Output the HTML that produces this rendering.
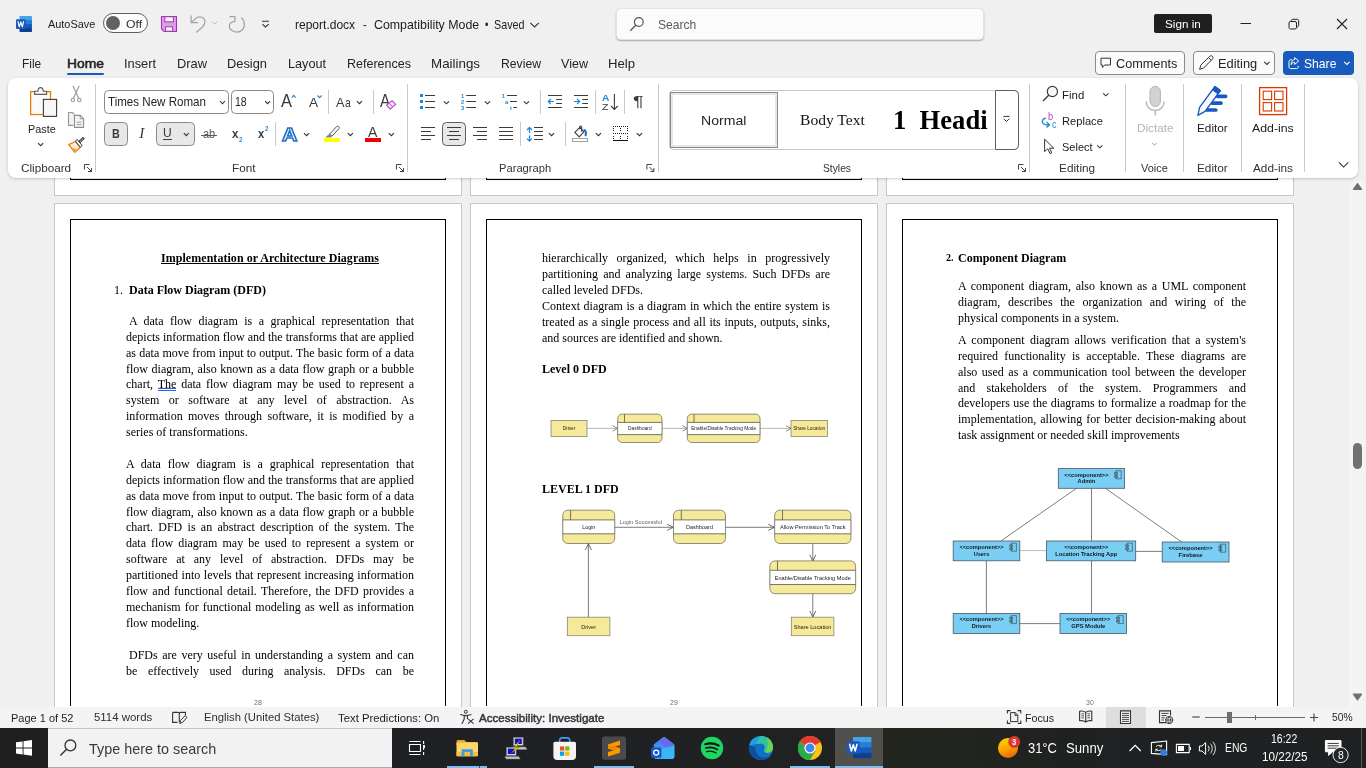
<!DOCTYPE html>
<html lang="en">
<head>
<meta charset="utf-8">
<title>report.docx - Word</title>
<style>
*{box-sizing:border-box;margin:0;padding:0}
html,body{width:1366px;height:768px;overflow:hidden;background:#f0f0f0}
body{position:relative;font-family:"Liberation Sans",sans-serif;font-size:13px;color:#242424}
.a{position:absolute;white-space:pre}
svg{position:absolute;overflow:visible}
#doc{position:absolute;left:0;top:0;width:1366px;height:768px;clip-path:inset(178px 0 61px 0);background:#f0f0f0}
.page{position:absolute;width:408px;height:530px;background:#fff;border:1px solid #c8c8c8}
.pb{position:absolute;width:376px;height:498px;border:1px solid #000}
.t{position:absolute;white-space:pre;font-family:"Liberation Serif",serif;font-size:12px;line-height:16px;height:16px;color:#000}
.j{width:288px;text-align:justify;text-align-last:justify;white-space:normal}
.b{font-weight:bold}
.pn{position:absolute;font-family:"Liberation Sans",sans-serif;font-size:7px;color:#6e6e6e;line-height:8px;height:8px;width:20px;text-align:center}
#ribbon{position:absolute;left:8px;top:78px;width:1350px;height:100px;background:#fff;border-radius:8px;box-shadow:0 1px 3px rgba(0,0,0,.2)}
#status{position:absolute;left:0;top:707px;width:1366px;height:21px;background:#f4f4f4}
#task{position:absolute;left:0;top:728px;width:1366px;height:40px;background:linear-gradient(90deg,#1f1f1f 0,#1f1f1f 48px,#1e2023 400px,#1f2123 800px,#23251f 890px,#22241f 960px,#1f2122 1100px,#1e2022 1366px)}
#all{position:absolute;left:0;top:0;width:1366px;height:768px;overflow:hidden;will-change:transform}

</style>
</head>
<body>
<div id="all">
<svg style="left:15px;top:15px" width="18" height="18" viewBox="0 0 18 18" >
<rect x="4.5" y="1" width="12.5" height="4.2" rx="0.8" fill="#41a5ee"/>
<rect x="4.5" y="5" width="12.5" height="4" fill="#2b7cd3"/>
<rect x="4.5" y="9" width="12.5" height="4" fill="#185abd"/>
<rect x="4.5" y="13" width="12.5" height="4" rx="0.8" fill="#103f91"/>
<rect x="1" y="4.3" width="9.6" height="9.6" rx="1" fill="#185abd"/>
<path d="M3 6.6l1.3 5.2 1.5-5 1.5 5 1.3-5.2" fill="none" stroke="#fff" stroke-width="1.15" stroke-linejoin="round" stroke-linecap="round"/>
</svg>
<span class="a" style="left:48.3px;top:18px;font-size:11.3px;line-height:12px;height:12px;color:#1c1c1c;transform:scaleX(0.9633);transform-origin:0 0;">AutoSave</span>
<div class="a" style="left:103px;top:13px;width:45px;height:20px;background:#fcfcfc;border:1px solid #5e5e5e;border-radius:10px;"></div>
<div class="a" style="left:106.3px;top:16.2px;width:13.6px;height:13.6px;background:#616161;border-radius:7px;"></div>
<span class="a" style="left:125.6px;top:18px;font-size:11.3px;line-height:12px;height:12px;color:#333;transform:scaleX(1.0891);transform-origin:0 0;">Off</span>
<svg style="left:160px;top:15px" width="18" height="18" viewBox="0 0 18 18" >
<path d="M1.5 1.5h15v15H4.2L1.5 13.8z" fill="#dc9fe6" stroke="#a233b4" stroke-width="1.1" stroke-linejoin="round"/>
<rect x="4.8" y="1.8" width="8.6" height="5" fill="#fbfbfb" stroke="#a233b4" stroke-width="1"/>
<rect x="5.6" y="11.8" width="7" height="4.4" fill="#fbfbfb" stroke="#a233b4" stroke-width="1"/>
</svg>
<svg style="left:188px;top:14px" width="20" height="20" viewBox="0 0 20 20" ><path d="M3.1 1.6V8.7H10.2M3.4 8.4L8 4.2C11.2 1.4 17 3.2 17 8C17 10.6 15.4 12.2 14 13.5L8.1 18.4" fill="none" stroke="#a3a3a3" stroke-width="1.25"/></svg>
<svg style="left:211px;top:20px" width="8" height="6" viewBox="0 0 8 6" ><path d="M1 1.6L3.6 4.2L6.2 1.6" fill="none" stroke="#b5b5b5" stroke-width="1"/></svg>
<svg style="left:227px;top:14px" width="20" height="20" viewBox="0 0 20 20" ><path d="M2.4 2.5H7.9V8M7.7 7.4C4.5 7.9 2.3 9.6 2.3 12.2C2.3 15.4 5.6 18 9.8 18C14 18 17.4 14.9 17.4 10.8C17.4 7.6 15.9 5 14.3 3.6" fill="none" stroke="#a3a3a3" stroke-width="1.25"/></svg>
<svg style="left:260px;top:19px" width="12" height="10" viewBox="0 0 12 10" ><path d="M2 2.3H9M2.3 5.2L5.5 8L8.7 5.2" fill="none" stroke="#333" stroke-width="1.1"/></svg>
<span class="a" style="left:295.2px;top:18px;font-size:12.4px;line-height:14px;height:14px;color:#1c1c1c;transform:scaleX(0.9696);transform-origin:0 0;">report.docx</span>
<span class="a" style="left:362.9px;top:18px;font-size:12.4px;line-height:14px;height:14px;color:#1c1c1c;transform:scaleX(0.8936);transform-origin:0 0;">-</span>
<span class="a" style="left:373.8px;top:18px;font-size:12.4px;line-height:14px;height:14px;color:#1c1c1c;transform:scaleX(0.9983);transform-origin:0 0;">Compatibility Mode</span>
<span class="a" style="left:485px;top:18px;font-size:12.4px;line-height:14px;height:14px;color:#1c1c1c;transform:scaleX(0.7827);transform-origin:0 0;">•</span>
<span class="a" style="left:494px;top:18px;font-size:12.4px;line-height:14px;height:14px;color:#1c1c1c;transform:scaleX(0.8679);transform-origin:0 0;">Saved</span>
<svg style="left:529px;top:21px" width="12" height="8" viewBox="0 0 12 8" ><path d="M1.3 1.8L5.6 6L9.9 1.8" fill="none" stroke="#333" stroke-width="1.1"/></svg>
<div class="a" style="left:616px;top:8px;width:368px;height:32px;background:#fbfbfb;border:1px solid #e4e4e4;border-radius:4.5px;box-shadow:0 1px 1.5px rgba(0,0,0,.3);"></div>
<svg style="left:628px;top:15px" width="20" height="18" viewBox="0 0 20 18" ><circle cx="10.8" cy="7" r="4.4" fill="none" stroke="#555" stroke-width="1.2"/><path d="M7.7 10.3L2.3 15.8" stroke="#555" stroke-width="1.3" fill="none"/></svg>
<span class="a" style="left:658.3px;top:17px;font-size:13px;line-height:15px;height:15px;color:#5a5a5a;transform:scaleX(0.9295);transform-origin:0 0;">Search</span>
<div class="a" style="left:1154px;top:14px;width:58px;height:19px;background:#1f1f1f;border-radius:2px;"></div>
<span class="a" style="left:1164.8px;top:18px;font-size:11.3px;line-height:12px;height:12px;color:#fff;transform:scaleX(1.0363);transform-origin:0 0;">Sign in</span>
<svg style="left:1238px;top:18px" width="14" height="12" viewBox="0 0 14 12" ><path d="M2.5 5.5H13" stroke="#222" stroke-width="1" fill="none"/></svg>
<svg style="left:1287px;top:17px" width="14" height="14" viewBox="0 0 14 14" ><rect x="2" y="4.5" width="7.5" height="7.5" rx="1.5" fill="none" stroke="#222" stroke-width="1"/><path d="M4.2 4.5V3.8C4.2 3 4.8 2.3 5.7 2.3H10C11.1 2.3 11.7 3 11.7 4V8.3C11.7 9.2 11.1 9.8 10.3 9.8H9.5" fill="none" stroke="#222" stroke-width="1"/></svg>
<svg style="left:1335px;top:17px" width="14" height="14" viewBox="0 0 14 14" ><path d="M2 2L12 12M12 2L2 12" stroke="#222" stroke-width="1.1" fill="none"/></svg>
<span class="a" style="left:22px;top:56px;font-size:13px;line-height:15px;height:15px;color:#242424;transform:scaleX(0.9163);transform-origin:0 0;">File</span>
<span class="a" style="left:67px;top:56px;font-size:13px;line-height:15px;height:15px;color:#242424;transform:scaleX(1.0667);transform-origin:0 0;-webkit-text-stroke:0.55px #242424;">Home</span>
<span class="a" style="left:124px;top:56px;font-size:13px;line-height:15px;height:15px;color:#242424;transform:scaleX(0.9841);transform-origin:0 0;">Insert</span>
<span class="a" style="left:177px;top:56px;font-size:13px;line-height:15px;height:15px;color:#242424;transform:scaleX(0.9887);transform-origin:0 0;">Draw</span>
<span class="a" style="left:227px;top:56px;font-size:13px;line-height:15px;height:15px;color:#242424;transform:scaleX(0.9884);transform-origin:0 0;">Design</span>
<span class="a" style="left:288px;top:56px;font-size:13px;line-height:15px;height:15px;color:#242424;transform:scaleX(0.9732);transform-origin:0 0;">Layout</span>
<span class="a" style="left:347px;top:56px;font-size:13px;line-height:15px;height:15px;color:#242424;transform:scaleX(0.9626);transform-origin:0 0;">References</span>
<span class="a" style="left:431px;top:56px;font-size:13px;line-height:15px;height:15px;color:#242424;transform:scaleX(1.0275);transform-origin:0 0;">Mailings</span>
<span class="a" style="left:501px;top:56px;font-size:13px;line-height:15px;height:15px;color:#242424;transform:scaleX(0.9384);transform-origin:0 0;">Review</span>
<span class="a" style="left:561px;top:56px;font-size:13px;line-height:15px;height:15px;color:#242424;transform:scaleX(0.9659);transform-origin:0 0;">View</span>
<span class="a" style="left:608px;top:56px;font-size:13px;line-height:15px;height:15px;color:#242424;transform:scaleX(1.0093);transform-origin:0 0;">Help</span>
<div class="a" style="left:67px;top:73px;width:37px;height:2px;background:#185abd;border-radius:1px;"></div>
<div class="a" style="left:1095px;top:51px;width:90px;height:24px;background:#fbfbfb;border:1px solid #8a8a8a;border-radius:4px;"></div>
<svg style="left:1099px;top:56px" width="14" height="14" viewBox="0 0 14 14" ><path d="M2 2.2H11.5V9H5.8L3.4 11.4V9H2Z" fill="none" stroke="#333" stroke-width="1" stroke-linejoin="round"/></svg>
<span class="a" style="left:1116.3px;top:56px;font-size:13px;line-height:15px;height:15px;transform:scaleX(0.9752);transform-origin:0 0;">Comments</span>
<div class="a" style="left:1193px;top:51px;width:82px;height:24px;background:#fbfbfb;border:1px solid #8a8a8a;border-radius:4px;"></div>
<svg style="left:1197px;top:54px" width="18" height="18" viewBox="0 0 18 18" ><path d="M2.6 15.4L3.8 11.2L12.6 2.4C13.4 1.6 14.6 1.6 15.4 2.4C16.2 3.2 16.2 4.4 15.4 5.2L6.6 14Z M11.6 3.6L14.2 6.2" fill="none" stroke="#333" stroke-width="1" stroke-linejoin="round"/></svg>
<span class="a" style="left:1218.4px;top:56px;font-size:13px;line-height:15px;height:15px;transform:scaleX(0.9862);transform-origin:0 0;">Editing</span>
<svg style="left:1263px;top:60px" width="8" height="7" viewBox="0 0 8 7" ><path d="M1.2 1.8L3.9 4.5L6.6 1.8" fill="none" stroke="#333" stroke-width="1.1"/></svg>
<div class="a" style="left:1283px;top:51px;width:71px;height:24px;background:#185abd;border-radius:4px;"></div>
<svg style="left:1287px;top:55px" width="14" height="16" viewBox="0 0 14 16" ><path d="M5.2 4.8H3.6C2.7 4.8 2 5.5 2 6.4V12C2 12.9 2.7 13.6 3.6 13.6H9.6C10.5 13.6 11.2 12.9 11.2 12V10.8M7.6 2.6L11.8 6L7.6 9.4V7.4C5.8 7.4 4.8 8.2 4.2 9.6C4.2 6.8 5.6 4.9 7.6 4.6Z" fill="none" stroke="#fff" stroke-width="1" stroke-linejoin="round"/></svg>
<span class="a" style="left:1304.3px;top:56px;font-size:13px;line-height:15px;height:15px;color:#fff;transform:scaleX(0.9336);transform-origin:0 0;">Share</span>
<svg style="left:1343px;top:60px" width="8" height="7" viewBox="0 0 8 7" ><path d="M1.2 1.8L3.9 4.5L6.6 1.8" fill="none" stroke="#fff" stroke-width="1.1"/></svg>
<div id="doc">
<div class="page" style="left:54px;top:-334px"></div>
<div class="pb" style="left:70px;top:-318px"></div>
<div class="page" style="left:54px;top:203px"></div>
<div class="pb" style="left:70px;top:219px"></div>
<div style="position:absolute;left:55px;top:706px;width:406px;height:1px;background:#fff"></div>
<div class="pn" style="left:248px;top:699px">28</div>
<div class="page" style="left:470px;top:-334px"></div>
<div class="pb" style="left:486px;top:-318px"></div>
<div class="page" style="left:470px;top:203px"></div>
<div class="pb" style="left:486px;top:219px"></div>
<div style="position:absolute;left:471px;top:706px;width:406px;height:1px;background:#fff"></div>
<div class="pn" style="left:664px;top:699px">29</div>
<div class="page" style="left:886px;top:-334px"></div>
<div class="pb" style="left:902px;top:-318px"></div>
<div class="page" style="left:886px;top:203px"></div>
<div class="pb" style="left:902px;top:219px"></div>
<div style="position:absolute;left:887px;top:706px;width:406px;height:1px;background:#fff"></div>
<div class="pn" style="left:1080px;top:699px">30</div>
<div class="t b" style="left:161px;top:250px;text-decoration:underline;letter-spacing:0.045px;">Implementation or Architecture Diagrams</div>
<div class="t" style="left:114px;top:282px;">1.</div>
<div class="t b" style="left:129px;top:282px;">Data Flow Diagram (DFD)</div>
<div class="t j" style="left:126px;top:313px;padding-left:3px;">A data flow diagram is a graphical representation that</div>
<div class="t j" style="left:126px;top:329px;">depicts information flow and the transforms that are applied</div>
<div class="t j" style="left:126px;top:345px;">as data move from input to output. The basic form of a data</div>
<div class="t j" style="left:126px;top:361px;">flow diagram, also known as a data flow graph or a bubble</div>
<div class="t j" style="left:126px;top:376px;">chart, The data flow diagram may be used to represent a</div>
<div class="t j" style="left:126px;top:392px;">system or software at any level of abstraction. As</div>
<div class="t j" style="left:126px;top:408px;">information moves through software, it is modified by a</div>
<div class="t" style="left:126px;top:424px;">series of transformations.</div>
<div class="t j" style="left:126px;top:456px;">A data flow diagram is a graphical representation that</div>
<div class="t j" style="left:126px;top:472px;">depicts information flow and the transforms that are applied</div>
<div class="t j" style="left:126px;top:488px;">as data move from input to output. The basic form of a data</div>
<div class="t j" style="left:126px;top:504px;">flow diagram, also known as a data flow graph or a bubble</div>
<div class="t j" style="left:126px;top:519px;">chart. DFD is an abstract description of the system. The</div>
<div class="t j" style="left:126px;top:535px;">data flow diagram may be used to represent a system or</div>
<div class="t j" style="left:126px;top:551px;">software at any level of abstraction. DFDs may be</div>
<div class="t j" style="left:126px;top:567px;">partitioned into levels that represent increasing information</div>
<div class="t j" style="left:126px;top:583px;">flow and functional detail. Therefore, the DFD provides a</div>
<div class="t j" style="left:126px;top:599px;">mechanism for functional modeling as well as information</div>
<div class="t" style="left:126px;top:615px;">flow modeling.</div>
<div class="t j" style="left:126px;top:647px;padding-left:3px;">DFDs are very useful in understanding a system and can</div>
<div class="t j" style="left:126px;top:663px;">be effectively used during analysis. DFDs can be</div>
<div style="position:absolute;left:158px;top:388px;width:18px;height:3px;border-top:1px solid #2563e0;border-bottom:1px solid #2563e0"></div>
<div class="t j" style="left:542px;top:250px;">hierarchically organized, which helps in progressively</div>
<div class="t j" style="left:542px;top:266px;">partitioning and analyzing large systems. Such DFDs are</div>
<div class="t" style="left:542px;top:282px;">called leveled DFDs.</div>
<div class="t j" style="left:542px;top:298px;">Context diagram is a diagram in which the entire system is</div>
<div class="t j" style="left:542px;top:314px;">treated as a single process and all its inputs, outputs, sinks,</div>
<div class="t" style="left:542px;top:330px;">and sources are identified and shown.</div>
<div class="t b" style="left:542px;top:361px;">Level 0 DFD</div>
<div class="t b" style="left:542px;top:481px;">LEVEL 1 DFD</div>
<div class="t b" style="left:946px;top:250px;font-size:10px;">2.</div>
<div class="t b" style="left:958px;top:250px;">Component Diagram</div>
<div class="t j" style="left:958px;top:278px;">A component diagram, also known as a UML component</div>
<div class="t j" style="left:958px;top:294px;">diagram, describes the organization and wiring of the</div>
<div class="t" style="left:958px;top:310px;">physical components in a system.</div>
<div class="t j" style="left:958px;top:332px;">A component diagram allows verification that a system's</div>
<div class="t j" style="left:958px;top:348px;">required functionality is acceptable. These diagrams are</div>
<div class="t j" style="left:958px;top:364px;">also used as a communication tool between the developer</div>
<div class="t j" style="left:958px;top:380px;">and stakeholders of the system. Programmers and</div>
<div class="t j" style="left:958px;top:395px;">developers use the diagrams to formalize a roadmap for the</div>
<div class="t j" style="left:958px;top:411px;">implementation, allowing for better decision-making about</div>
<div class="t" style="left:958px;top:427px;">task assignment or needed skill improvements</div>
<svg width="1366" height="768" viewBox="0 0 1366 768" style="left:0;top:0" font-family="Liberation Sans, sans-serif">
<rect x="551" y="420.4" width="36" height="16.1" fill="#f5e99a" stroke="#8a8672" stroke-width="0.8"/>
<text x="569" y="430.406" font-size="4.6" text-anchor="middle" fill="#2a1f0c" font-weight="normal" opacity="1" textLength="12.7" lengthAdjust="spacingAndGlyphs">Driver</text>
<path d="M587 428.4L617.5 428.4" stroke="#909090" stroke-width="0.65" fill="none"/>
<path d="M612.64 425.62L617.5 428.4L612.64 431.18" stroke="#4a4a4a" stroke-width="0.65" fill="none"/>
<rect x="617.7" y="414.1" width="44.3" height="28.4" rx="4.5" fill="#f5e99a" stroke="#77735f" stroke-width="0.8"/>
<rect x="618.1" y="422.4" width="43.5" height="12.2" fill="#fff"/>
<path d="M617.7 422.4H662M617.7 434.6H662M624.5 414.1V422.4" stroke="#5a5748" stroke-width="0.8" fill="none"/>
<path d="M617.7 422.4V434.6M662 422.4V434.6" stroke="#8a8a8a" stroke-width="0.7" fill="none"/>
<text x="639.85" y="430.456" font-size="4.6" text-anchor="middle" fill="#1c1c26" font-weight="normal" opacity="1" textLength="23.5" lengthAdjust="spacingAndGlyphs">Dashboard</text>
<path d="M662 428.4L687.3 428.4" stroke="#909090" stroke-width="0.65" fill="none"/>
<path d="M682.44 425.62L687.3 428.4L682.44 431.18" stroke="#4a4a4a" stroke-width="0.65" fill="none"/>
<rect x="687.3" y="414.1" width="72.7" height="28.4" rx="4.5" fill="#f5e99a" stroke="#77735f" stroke-width="0.8"/>
<rect x="687.7" y="422.4" width="71.9" height="12.2" fill="#fff"/>
<path d="M687.3 422.4H760M687.3 434.6H760M694 414.1V422.4" stroke="#5a5748" stroke-width="0.8" fill="none"/>
<path d="M687.3 422.4V434.6M760 422.4V434.6" stroke="#8a8a8a" stroke-width="0.7" fill="none"/>
<text x="723.65" y="430.456" font-size="4.6" text-anchor="middle" fill="#1c1c26" font-weight="normal" opacity="1" textLength="65" lengthAdjust="spacingAndGlyphs">Enable/Disable Tracking Mode</text>
<path d="M760 428.4L791 428.4" stroke="#909090" stroke-width="0.65" fill="none"/>
<path d="M786.14 425.62L791 428.4L786.14 431.18" stroke="#4a4a4a" stroke-width="0.65" fill="none"/>
<rect x="791" y="420.4" width="36.4" height="16.1" fill="#f5e99a" stroke="#8a8672" stroke-width="0.8"/>
<text x="809.2" y="430.406" font-size="4.6" text-anchor="middle" fill="#2a1f0c" font-weight="normal" opacity="1" textLength="32" lengthAdjust="spacingAndGlyphs">Share Location</text>
<rect x="562.8" y="510.2" width="51.9" height="33.3" rx="5" fill="#f5e99a" stroke="#77735f" stroke-width="0.8"/>
<rect x="563.2" y="519.9" width="51.1" height="13.9" fill="#fff"/>
<path d="M562.8 519.9H614.7M562.8 533.8H614.7M570.6 510.2V519.9" stroke="#5a5748" stroke-width="0.8" fill="none"/>
<path d="M562.8 519.9V533.8M614.7 519.9V533.8" stroke="#8a8a8a" stroke-width="0.7" fill="none"/>
<text x="588.75" y="529.166" font-size="5.6" text-anchor="middle" fill="#1c1c26" font-weight="normal" opacity="1" textLength="13.2" lengthAdjust="spacingAndGlyphs">Login</text>
<path d="M614.7 527.3L673.4 527.3" stroke="#5c5c5c" stroke-width="0.8" fill="none"/>
<path d="M667.10 524.26L673.4 527.3L667.10 530.34" stroke="#4a4a4a" stroke-width="0.8" fill="none"/>
<text x="640.8" y="524.316" font-size="5.6" text-anchor="middle" fill="#666" font-weight="normal" opacity="1" textLength="42.4" lengthAdjust="spacingAndGlyphs">Login Successful</text>
<rect x="673.5" y="510.2" width="52" height="33.3" rx="5" fill="#f5e99a" stroke="#77735f" stroke-width="0.8"/>
<rect x="673.9" y="519.9" width="51.2" height="13.9" fill="#fff"/>
<path d="M673.5 519.9H725.5M673.5 533.8H725.5M681.3 510.2V519.9" stroke="#5a5748" stroke-width="0.8" fill="none"/>
<path d="M673.5 519.9V533.8M725.5 519.9V533.8" stroke="#8a8a8a" stroke-width="0.7" fill="none"/>
<text x="699.5" y="529.166" font-size="5.6" text-anchor="middle" fill="#1c1c26" font-weight="normal" opacity="1" textLength="27" lengthAdjust="spacingAndGlyphs">Dashboard</text>
<path d="M725.5 527.3L774.6 527.3" stroke="#5c5c5c" stroke-width="0.8" fill="none"/>
<path d="M768.30 524.26L774.6 527.3L768.30 530.34" stroke="#4a4a4a" stroke-width="0.8" fill="none"/>
<rect x="774.7" y="510.2" width="76.2" height="33.3" rx="5" fill="#f5e99a" stroke="#77735f" stroke-width="0.8"/>
<rect x="775.1" y="519.9" width="75.4" height="13.9" fill="#fff"/>
<path d="M774.7 519.9H850.9M774.7 533.8H850.9M782.5 510.2V519.9" stroke="#5a5748" stroke-width="0.8" fill="none"/>
<path d="M774.7 519.9V533.8M850.9 519.9V533.8" stroke="#8a8a8a" stroke-width="0.7" fill="none"/>
<text x="812.8" y="529.166" font-size="5.6" text-anchor="middle" fill="#1c1c26" font-weight="normal" opacity="1" textLength="65.4" lengthAdjust="spacingAndGlyphs">Allow Permission To Track</text>
<path d="M812.8 543.5L812.8 561" stroke="#5c5c5c" stroke-width="0.8" fill="none"/>
<path d="M815.84 554.70L812.8 561L809.76 554.70" stroke="#4a4a4a" stroke-width="0.8" fill="none"/>
<rect x="769.9" y="560.9" width="85.7" height="32.8" rx="5" fill="#f5e99a" stroke="#77735f" stroke-width="0.8"/>
<rect x="770.3" y="570.3" width="84.9" height="14.2" fill="#fff"/>
<path d="M769.9 570.3H855.6M769.9 584.5H855.6M777.5 560.9V570.3" stroke="#5a5748" stroke-width="0.8" fill="none"/>
<path d="M769.9 570.3V584.5M855.6 570.3V584.5" stroke="#8a8a8a" stroke-width="0.7" fill="none"/>
<text x="812.75" y="579.716" font-size="5.6" text-anchor="middle" fill="#1c1c26" font-weight="normal" opacity="1" textLength="76.2" lengthAdjust="spacingAndGlyphs">Enable/Disable Tracking Mode</text>
<path d="M812.8 593.7L812.8 617.1" stroke="#5c5c5c" stroke-width="0.8" fill="none"/>
<path d="M815.84 610.80L812.8 617.1L809.76 610.80" stroke="#4a4a4a" stroke-width="0.8" fill="none"/>
<rect x="791.3" y="617.2" width="42.6" height="18.5" fill="#f5e99a" stroke="#8a8672" stroke-width="0.8"/>
<text x="812.6" y="628.766" font-size="5.6" text-anchor="middle" fill="#2a1f0c" font-weight="normal" opacity="1" textLength="37.7" lengthAdjust="spacingAndGlyphs">Share Location</text>
<rect x="567.3" y="617.2" width="42.6" height="18.5" fill="#f5e99a" stroke="#8a8672" stroke-width="0.8"/>
<text x="588.6" y="628.766" font-size="5.6" text-anchor="middle" fill="#2a1f0c" font-weight="normal" opacity="1" textLength="14.8" lengthAdjust="spacingAndGlyphs">Driver</text>
<path d="M588.4 617.2L588.4 543.7" stroke="#5c5c5c" stroke-width="0.8" fill="none"/>
<path d="M585.36 550.00L588.4 543.7L591.44 550.00" stroke="#4a4a4a" stroke-width="0.8" fill="none"/>
<path d="M1076.5 488.3L1000.8 541M1091.5 488.3V541M1105.4 488.3L1181.7 542M986.4 560.7V613.4M1091.5 560.7V613.4M1019.8 623.6H1060M1135.8 551.4H1162" stroke="#6f6f6f" stroke-width="0.9" fill="none"/>
<path d="M1019.8 550.6H1046.4" stroke="#b5b5b5" stroke-width="0.9" fill="none"/>
<rect x="1058.3" y="468.6" width="66.3" height="19.7" fill="#7acef4" stroke="#4a5560" stroke-width="0.8"/>
<text x="1086.45" y="476.544" font-size="5.4" text-anchor="middle" fill="#10181f" font-weight="bold" opacity="1" textLength="44.2" lengthAdjust="spacingAndGlyphs">&lt;&lt;component&gt;&gt;</text>
<text x="1086.45" y="483.444" font-size="5.4" text-anchor="middle" fill="#10181f" font-weight="bold" opacity="1" textLength="17.7" lengthAdjust="spacingAndGlyphs">Admin</text>
<path d="M1116 470.8h5.2v8h-5.2zM1114.5 472.4h3v1.8h-3zM1114.5 475.6h3v1.8h-3z" fill="#7acef4" stroke="#2a3540" stroke-width="0.55"/>
<rect x="953.2" y="541" width="66.6" height="19.8" fill="#7acef4" stroke="#4a5560" stroke-width="0.8"/>
<text x="981.5" y="548.944" font-size="5.4" text-anchor="middle" fill="#10181f" font-weight="bold" opacity="1" textLength="44.2" lengthAdjust="spacingAndGlyphs">&lt;&lt;component&gt;&gt;</text>
<text x="981.5" y="555.844" font-size="5.4" text-anchor="middle" fill="#10181f" font-weight="bold" opacity="1" textLength="15.5" lengthAdjust="spacingAndGlyphs">Users</text>
<path d="M1011.2 543.2h5.2v8h-5.2zM1009.7 544.8h3v1.8h-3zM1009.7 548h3v1.8h-3z" fill="#7acef4" stroke="#2a3540" stroke-width="0.55"/>
<rect x="1046.4" y="541" width="89.3" height="19.8" fill="#7acef4" stroke="#4a5560" stroke-width="0.8"/>
<text x="1086.25" y="548.944" font-size="5.4" text-anchor="middle" fill="#10181f" font-weight="bold" opacity="1" textLength="44.2" lengthAdjust="spacingAndGlyphs">&lt;&lt;component&gt;&gt;</text>
<text x="1086.25" y="555.844" font-size="5.4" text-anchor="middle" fill="#10181f" font-weight="bold" opacity="1" textLength="62" lengthAdjust="spacingAndGlyphs">Location Tracking App</text>
<path d="M1127.1 543.2h5.2v8h-5.2zM1125.6 544.8h3v1.8h-3zM1125.6 548h3v1.8h-3z" fill="#7acef4" stroke="#2a3540" stroke-width="0.55"/>
<rect x="1162.2" y="542" width="66.8" height="20" fill="#7acef4" stroke="#4a5560" stroke-width="0.8"/>
<text x="1190.6" y="549.944" font-size="5.4" text-anchor="middle" fill="#10181f" font-weight="bold" opacity="1" textLength="44.2" lengthAdjust="spacingAndGlyphs">&lt;&lt;component&gt;&gt;</text>
<text x="1190.6" y="556.844" font-size="5.4" text-anchor="middle" fill="#10181f" font-weight="bold" opacity="1" textLength="24" lengthAdjust="spacingAndGlyphs">Firebase</text>
<path d="M1220.4 544.2h5.2v8h-5.2zM1218.9 545.8h3v1.8h-3zM1218.9 549h3v1.8h-3z" fill="#7acef4" stroke="#2a3540" stroke-width="0.55"/>
<rect x="953.2" y="613.4" width="66.6" height="20" fill="#7acef4" stroke="#4a5560" stroke-width="0.8"/>
<text x="981.5" y="621.344" font-size="5.4" text-anchor="middle" fill="#10181f" font-weight="bold" opacity="1" textLength="44.2" lengthAdjust="spacingAndGlyphs">&lt;&lt;component&gt;&gt;</text>
<text x="981.5" y="628.244" font-size="5.4" text-anchor="middle" fill="#10181f" font-weight="bold" opacity="1" textLength="19.5" lengthAdjust="spacingAndGlyphs">Drivers</text>
<path d="M1011.2 615.6h5.2v8h-5.2zM1009.7 617.2h3v1.8h-3zM1009.7 620.4h3v1.8h-3z" fill="#7acef4" stroke="#2a3540" stroke-width="0.55"/>
<rect x="1060" y="613.4" width="66.6" height="20" fill="#7acef4" stroke="#4a5560" stroke-width="0.8"/>
<text x="1088.3" y="621.344" font-size="5.4" text-anchor="middle" fill="#10181f" font-weight="bold" opacity="1" textLength="44.2" lengthAdjust="spacingAndGlyphs">&lt;&lt;component&gt;&gt;</text>
<text x="1088.3" y="628.244" font-size="5.4" text-anchor="middle" fill="#10181f" font-weight="bold" opacity="1" textLength="34" lengthAdjust="spacingAndGlyphs">GPS Module</text>
<path d="M1118 615.6h5.2v8h-5.2zM1116.5 617.2h3v1.8h-3zM1116.5 620.4h3v1.8h-3z" fill="#7acef4" stroke="#2a3540" stroke-width="0.55"/>
</svg>
</div>
<div class="a" style="left:1349px;top:180px;width:17px;height:527px;background:#f4f4f4;border-radius:8px 8px 0 0"></div>
<svg style="left:0;top:0" width="1" height="1"><path d="M1357.5 183.6L1361.6 189.4H1353.4Z" fill="#6e6e6e" stroke="#6e6e6e" stroke-width="1.2" stroke-linejoin="round"/><path d="M1357.5 700L1361.6 694.2H1353.4Z" fill="#6e6e6e" stroke="#6e6e6e" stroke-width="1.2" stroke-linejoin="round"/></svg>
<div class="a" style="left:1353px;top:443px;width:9px;height:26px;background:#727272;border-radius:4.5px"></div>
<div id="ribbon"></div>
<svg style="left:28px;top:85px" width="32" height="34" viewBox="0 0 32 34" >
<rect x="2.6" y="6.6" width="20" height="23" fill="#fdf3d6" stroke="#e97b12" stroke-width="1.2"/>
<rect x="4.4" y="8.4" width="16.6" height="19.6" fill="#fafafa"/>
<path d="M6.6 9.3V6.2H10C10 4 11.2 2.6 12.6 2.6C14 2.6 15.2 4 15.2 6.2H18.6V9.3Z" fill="#fafafa" stroke="#5e5e5e" stroke-width="1.15"/>
<rect x="15.4" y="14.4" width="13.2" height="17" fill="#f6f6f6" stroke="#3b3b3b" stroke-width="1.1"/>
</svg>
<span class="a" style="left:27.6px;top:122px;font-size:11.7px;line-height:13px;height:13px;color:#1c1c1c;transform:scaleX(0.9267);transform-origin:0 0;">Paste</span>
<svg style="left:0;top:0" width="1" height="1"><path d="M38.05 143.2L40.65 145.65L43.25 143.2" fill="none" stroke="#333" stroke-width="1.1"/></svg>
<svg style="left:0;top:0" width="1" height="1"><path d="M73.3 86.4L78.7 98.2M78.9 86.4L73.5 98.2" fill="none" stroke="#a0a0a0" stroke-width="1.3" stroke-linecap="round"/></svg>
<svg style="left:0;top:0" width="1" height="1"><circle cx="72.9" cy="100.1" r="1.7" fill="none" stroke="#a0a0a0" stroke-width="1.1"/><circle cx="79.3" cy="100.1" r="1.7" fill="none" stroke="#a0a0a0" stroke-width="1.1"/></svg>
<svg style="left:0;top:0" width="1" height="1"><path d="M73.6 125.4H68.5V112.5H72.6L74.4 114.3" fill="#f2f2f2" stroke="#969696" stroke-width="1.1" /></svg>
<svg style="left:0;top:0" width="1" height="1"><path d="M74.5 115.4H80.4L83.6 118.6V127.4H74.5Z" fill="#f4f4f4" stroke="#8e8e8e" stroke-width="1.1" stroke-linejoin="round"/></svg>
<svg style="left:0;top:0" width="1" height="1"><path d="M80.2 115.6V118.8H83.4" fill="none" stroke="#8e8e8e" stroke-width="0.9" /></svg>
<svg style="left:0;top:0" width="1" height="1"><path d="M76.6 122.2H81.6M76.6 124.6H81.6" fill="none" stroke="#a0a0a0" stroke-width="1" /></svg>
<svg style="left:0;top:0" width="1" height="1"><path d="M68.7 144.6L75.3 141.5L80.1 147.5L74.8 152.4Z" fill="#fdebd3" stroke="#e8780f" stroke-width="1.2" stroke-linejoin="round"/></svg>
<svg style="left:0;top:0" width="1" height="1"><path d="M71.4 147.6L78 149.6L74.8 152.2Z" fill="#f5a349" stroke="none" stroke-width="0" /></svg>
<svg style="left:0;top:0" width="1" height="1"><path d="M75.4 141L77.4 139.6L82.2 145.6L80.2 147.2Z" fill="#fbfbfb" stroke="#3b3b3b" stroke-width="1" stroke-linejoin="round"/></svg>
<svg style="left:0;top:0" width="1" height="1"><path d="M80 141.6L83.1 138.6" fill="none" stroke="#3b3b3b" stroke-width="2.8" stroke-linecap="round"/></svg>
<svg style="left:0;top:0" width="1" height="1"><path d="M80.2 141.4L82.9 138.8" fill="none" stroke="#f2f2f2" stroke-width="0.8" stroke-linecap="round"/></svg>
<span class="a" style="left:20.7px;top:162px;font-size:11.3px;line-height:12px;height:12px;color:#333;transform:scaleX(1.0360);transform-origin:0 0;">Clipboard</span>
<svg style="left:0;top:0" width="1" height="1"><path d="M84.5 169.5V164.5H89.5 M87 167L91.3 171.3 M91.5 168V171.5H88" fill="none" stroke="#444" stroke-width="1" /></svg>
<div class="a" style="left:95px;top:83.5px;width:1px;height:88.5px;background:#c9c9c9;"></div>
<div class="a" style="left:104px;top:90px;width:125px;height:24px;background:#fff;border:1px solid #8a8a8a;border-radius:4.5px;"></div>
<span class="a" style="left:107.5px;top:95px;font-size:12.6px;line-height:14px;height:14px;color:#242424;transform:scaleX(0.9192);transform-origin:0 0;">Times New Roman</span>
<svg style="left:0;top:0" width="1" height="1"><path d="M220.15 101.2L222.5 103.75L224.85 101.2" fill="none" stroke="#333" stroke-width="1.1"/></svg>
<div class="a" style="left:231px;top:90px;width:43px;height:24px;background:#fff;border:1px solid #8a8a8a;border-radius:4.5px;"></div>
<span class="a" style="left:234.8px;top:95px;font-size:12.6px;line-height:14px;height:14px;color:#242424;transform:scaleX(0.8348);transform-origin:0 0;">18</span>
<svg style="left:0;top:0" width="1" height="1"><path d="M265.15 101.2L267.6 103.75L270.05 101.2" fill="none" stroke="#333" stroke-width="1.1"/></svg>
<span class="a" style="left:281px;top:91px;font-size:17.5px;line-height:20px;height:20px;color:#3b3b3b;transform:scaleX(0.9412);transform-origin:0 0;">A</span>
<svg style="left:0;top:0" width="1" height="1"><path d="M291.75 97.6L293.7 95.45L295.65 97.6" fill="none" stroke="#2b88d8" stroke-width="1.2"/></svg>
<span class="a" style="left:308.5px;top:95px;font-size:13.6px;line-height:15px;height:15px;color:#3b3b3b;transform:scaleX(1.0024);transform-origin:0 0;">A</span>
<svg style="left:0;top:0" width="1" height="1"><path d="M317.55 95.5L319.6 97.65L321.65 95.5" fill="none" stroke="#2b88d8" stroke-width="1.2"/></svg>
<div class="a" style="left:328px;top:90px;width:1px;height:23.6px;background:#c9c9c9;"></div>
<span class="a" style="left:335.5px;top:95px;font-size:13.2px;line-height:15px;height:15px;color:#3b3b3b;transform:scaleX(0.9663);transform-origin:0 0;">A</span>
<span class="a" style="left:345.2px;top:95px;font-size:13.2px;line-height:15px;height:15px;color:#3b3b3b;transform:scaleX(0.7898);transform-origin:0 0;">a</span>
<svg style="left:0;top:0" width="1" height="1"><path d="M356.95 101.2L359.45 103.75L361.95 101.2" fill="none" stroke="#333" stroke-width="1.1"/></svg>
<div class="a" style="left:373px;top:90px;width:1px;height:23.6px;background:#c9c9c9;"></div>
<span class="a" style="left:380px;top:91px;font-size:17.5px;line-height:20px;height:20px;color:#3b3b3b;transform:scaleX(0.8727);transform-origin:0 0;">A</span>
<svg style="left:0;top:0" width="1" height="1"><path d="M386.6 105.2L392 100.6L395.6 104.4L390.2 109.2Z" fill="#f6e6f9" stroke="#b146c2" stroke-width="1.1" stroke-linejoin="round"/></svg>
<svg style="left:0;top:0" width="1" height="1"><path d="M389 103.2L392.8 107" fill="none" stroke="#b146c2" stroke-width="1" /></svg>
<div class="a" style="left:104px;top:122px;width:24px;height:24px;background:#e8e8e8;border:1px solid #8a8a8a;border-radius:4.5px;"></div>
<span class="a" style="left:112.4px;top:126px;font-size:13.3px;line-height:15px;height:15px;font-weight:bold;color:#3b3b3b;transform:scaleX(0.8117);transform-origin:0 0;">B</span>
<span class="a" style="left:139.2px;top:124px;font-size:15.2px;line-height:17px;height:17px;font-family:'Liberation Serif',serif;font-style:italic;color:#3b3b3b;">I</span>
<div class="a" style="left:156px;top:122px;width:39px;height:24px;background:#e8e8e8;border:1px solid #8a8a8a;border-radius:4.5px;"></div>
<span class="a" style="left:163.2px;top:126px;font-size:12.6px;line-height:14px;height:14px;color:#3b3b3b;transform:scaleX(0.9551);transform-origin:0 0;">U</span>
<div class="a" style="left:163px;top:139px;width:9px;height:1px;background:#3b3b3b;"></div>
<svg style="left:0;top:0" width="1" height="1"><path d="M183.85 133.2L186.3 135.75L188.75 133.2" fill="none" stroke="#333" stroke-width="1.1"/></svg>
<span class="a" style="left:203px;top:126px;font-size:13.2px;line-height:15px;height:15px;color:#5a5a5a;transform:scaleX(0.8315);transform-origin:0 0;">ab</span>
<div class="a" style="left:201.3px;top:134.7px;width:15.7px;height:1px;background:#5a5a5a;"></div>
<span class="a" style="left:231.8px;top:127px;font-size:12.5px;line-height:14px;height:14px;font-weight:bold;color:#3b3b3b;transform:scaleX(0.9204);transform-origin:0 0;">x</span>
<span class="a" style="left:238.6px;top:136px;font-size:6.5px;line-height:7px;height:7px;font-weight:bold;color:#2b88d8;transform:scaleX(0.9379);transform-origin:0 0;">2</span>
<span class="a" style="left:258px;top:127px;font-size:12.5px;line-height:14px;height:14px;font-weight:bold;color:#3b3b3b;transform:scaleX(0.8917);transform-origin:0 0;">x</span>
<span class="a" style="left:265px;top:125px;font-size:6.5px;line-height:7px;height:7px;font-weight:bold;color:#2b88d8;transform:scaleX(0.9379);transform-origin:0 0;">2</span>
<div class="a" style="left:275px;top:122.3px;width:1px;height:23.4px;background:#c9c9c9;"></div>
<span class="a" style="left:282.2px;top:124.6px;font-size:19px;line-height:19px;font-weight:bold;color:#fdfdfd;-webkit-text-stroke:1.5px #1e6fc8;transform:scaleX(1.12);transform-origin:0 0">A</span>
<svg style="left:0;top:0" width="1" height="1"><path d="M303.95 133.2L306.55 135.75L309.15 133.2" fill="none" stroke="#333" stroke-width="1.1"/></svg>
<svg style="left:0;top:0" width="1" height="1"><path d="M329.6 134.2L336.4 126.8C337.2 126 338.2 126 338.8 126.6C339.4 127.2 339.4 128.2 338.8 128.9L332 136.2Z" fill="#fdfdfd" stroke="#555" stroke-width="1" stroke-linejoin="round"/></svg>
<svg style="left:0;top:0" width="1" height="1"><path d="M329.6 134.2L326.2 137H330.6L332 136.2Z" fill="#888" stroke="#777" stroke-width="0.8" /></svg>
<div class="a" style="left:324px;top:138px;width:16px;height:4px;background:#ffff00;"></div>
<svg style="left:0;top:0" width="1" height="1"><path d="M347.75 133.2L350.35 135.75L352.95 133.2" fill="none" stroke="#333" stroke-width="1.1"/></svg>
<span class="a" style="left:368.4px;top:124px;font-size:14px;line-height:16px;height:16px;color:#3b3b3b;transform:scaleX(1.0060);transform-origin:0 0;">A</span>
<div class="a" style="left:365px;top:138px;width:16px;height:4px;background:#f40000;"></div>
<svg style="left:0;top:0" width="1" height="1"><path d="M388.75 133.2L391.35 135.75L393.95 133.2" fill="none" stroke="#333" stroke-width="1.1"/></svg>
<span class="a" style="left:232px;top:162px;font-size:11.3px;line-height:12px;height:12px;color:#333;transform:scaleX(1.0394);transform-origin:0 0;">Font</span>
<svg style="left:0;top:0" width="1" height="1"><path d="M396.5 169.5V164.5H401.5 M399 167L403.3 171.3 M403.5 168V171.5H400" fill="none" stroke="#444" stroke-width="1" /></svg>
<div class="a" style="left:407px;top:83.5px;width:1px;height:88.5px;background:#c9c9c9;"></div>
<div class="a" style="left:420px;top:94px;width:3px;height:3px;background:#1e88d8;"></div>
<div class="a" style="left:420px;top:100px;width:3px;height:3px;background:#1e88d8;"></div>
<div class="a" style="left:420px;top:106px;width:3px;height:3px;background:#1e88d8;"></div>
<svg style="left:0;top:0" width="1" height="1"><path d="M425 95.5H435M425 101.5H435M425 107.5H435" fill="none" stroke="#3b3b3b" stroke-width="1.1" /></svg>
<svg style="left:0;top:0" width="1" height="1"><path d="M443.85 101.3L446.45 103.85L449.05 101.3" fill="none" stroke="#333" stroke-width="1.1"/></svg>
<span class="a" style="left:460.8px;top:93px;font-size:5.6px;line-height:6px;height:6px;font-weight:bold;color:#1e88d8;transform:scaleX(1.0240);transform-origin:0 0;">1</span>
<span class="a" style="left:460.8px;top:99px;font-size:5.6px;line-height:6px;height:6px;font-weight:bold;color:#1e88d8;transform:scaleX(1.0240);transform-origin:0 0;">2</span>
<span class="a" style="left:460.8px;top:105px;font-size:5.6px;line-height:6px;height:6px;font-weight:bold;color:#1e88d8;transform:scaleX(1.0240);transform-origin:0 0;">3</span>
<svg style="left:0;top:0" width="1" height="1"><path d="M466.2 95.5H476M466.2 101.5H476M466.2 107.5H476" fill="none" stroke="#3b3b3b" stroke-width="1.1" /></svg>
<svg style="left:0;top:0" width="1" height="1"><path d="M484.85 101.3L487.45 103.85L490.05 101.3" fill="none" stroke="#333" stroke-width="1.1"/></svg>
<span class="a" style="left:502px;top:93px;font-size:5.6px;line-height:6px;height:6px;font-weight:bold;color:#1e88d8;transform:scaleX(0.9600);transform-origin:0 0;">1</span>
<span class="a" style="left:504.6px;top:99px;font-size:6px;line-height:6px;height:6px;font-weight:bold;color:#1e88d8;transform:scaleX(1.0168);transform-origin:0 0;">a</span>
<span class="a" style="left:509.6px;top:105px;font-size:6px;line-height:6px;height:6px;font-weight:bold;color:#1e88d8;transform:scaleX(1.0766);transform-origin:0 0;">i</span>
<svg style="left:0;top:0" width="1" height="1"><path d="M507 95.5H517M510 101.5H517M513.3 107.5H517" fill="none" stroke="#3b3b3b" stroke-width="1.1" /></svg>
<svg style="left:0;top:0" width="1" height="1"><path d="M523.85 101.3L526.45 103.85L529.05 101.3" fill="none" stroke="#333" stroke-width="1.1"/></svg>
<div class="a" style="left:540px;top:90px;width:1px;height:23.6px;background:#c9c9c9;"></div>
<svg style="left:0;top:0" width="1" height="1"><path d="M548 95.5H562M556.2 99.5H562M556.2 103.5H562M548 107.5H562" fill="none" stroke="#3b3b3b" stroke-width="1.1" /></svg>
<svg style="left:0;top:0" width="1" height="1"><path d="M553.8 101.5H548.4M550.8 99L548.3 101.5L550.8 104" fill="none" stroke="#1e88d8" stroke-width="1.2" /></svg>
<svg style="left:0;top:0" width="1" height="1"><path d="M574 95.5H588M582.2 99.5H588M582.2 103.5H588M574 107.5H588" fill="none" stroke="#3b3b3b" stroke-width="1.1" /></svg>
<svg style="left:0;top:0" width="1" height="1"><path d="M574 101.5H579.5M577 99L579.6 101.5L577 104" fill="none" stroke="#1e88d8" stroke-width="1.2" /></svg>
<div class="a" style="left:595px;top:90px;width:1px;height:23.6px;background:#c9c9c9;"></div>
<span class="a" style="left:601.8px;top:92px;font-size:9.4px;line-height:11px;height:11px;font-weight:bold;color:#1e88d8;transform:scaleX(1.0912);transform-origin:0 0;">A</span>
<span class="a" style="left:602px;top:101px;font-size:9.4px;line-height:11px;height:11px;color:#3b3b3b;transform:scaleX(1.1161);transform-origin:0 0;">Z</span>
<svg style="left:0;top:0" width="1" height="1"><path d="M614.4 94V109.4M611 106L614.4 109.5L617.8 106" fill="none" stroke="#3b3b3b" stroke-width="1.1" /></svg>
<div class="a" style="left:624px;top:90px;width:1px;height:23.6px;background:#c9c9c9;"></div>
<span class="a" style="left:633.4px;top:93px;font-size:14.5px;line-height:16px;height:16px;color:#3b3b3b;transform:scaleX(1.3595);transform-origin:0 0;">¶</span>
<svg style="left:0;top:0" width="1" height="1"><path d="M421 127.5H435M421 131.5H431M421 135.5H435M421 139.5H431" fill="none" stroke="#3b3b3b" stroke-width="1.1" /></svg>
<div class="a" style="left:442px;top:122px;width:24px;height:24px;background:#e8e8e8;border:1px solid #5e5e5e;border-radius:4.5px;"></div>
<svg style="left:0;top:0" width="1" height="1"><path d="M447 127.5H461M449 131.5H459M447 135.5H461M449 139.5H459" fill="none" stroke="#3b3b3b" stroke-width="1.1" /></svg>
<svg style="left:0;top:0" width="1" height="1"><path d="M473 127.5H487M477 131.5H487M473 135.5H487M477 139.5H487" fill="none" stroke="#3b3b3b" stroke-width="1.1" /></svg>
<svg style="left:0;top:0" width="1" height="1"><path d="M499 127.5H513M499 131.5H513M499 135.5H513M499 139.5H513" fill="none" stroke="#3b3b3b" stroke-width="1.1" /></svg>
<div class="a" style="left:520px;top:122.3px;width:1px;height:23.4px;background:#c9c9c9;"></div>
<svg style="left:0;top:0" width="1" height="1"><path d="M529.5 127.6V133M527 130L529.5 127.4L532 130M529.5 135.6V141M527 138.6L529.5 141.2L532 138.6" fill="none" stroke="#1e88d8" stroke-width="1.25" /></svg>
<svg style="left:0;top:0" width="1" height="1"><path d="M534 127.5H543M534 131.5H543M534 135.5H543M534 139.5H543" fill="none" stroke="#3b3b3b" stroke-width="1.1" /></svg>
<svg style="left:0;top:0" width="1" height="1"><path d="M548.95 133.2L551.55 135.75L554.15 133.2" fill="none" stroke="#333" stroke-width="1.1"/></svg>
<div class="a" style="left:565px;top:122.3px;width:1px;height:23.4px;background:#c9c9c9;"></div>
<svg style="left:0;top:0" width="1" height="1"><path d="M579.8 127.4L584 131.8L579.2 136.8L574.8 132.4Z" fill="#fbfbfb" stroke="#3b3b3b" stroke-width="1.1" stroke-linejoin="round"/></svg>
<svg style="left:0;top:0" width="1" height="1"><path d="M579.7 128C579.3 125.5 581.7 125.3 581.7 127.4V131.2" fill="none" stroke="#3b3b3b" stroke-width="1.1" stroke-linecap="round"/></svg>
<svg style="left:0;top:0" width="1" height="1"><path d="M584.5 130C586.2 131.4 586.2 133.6 585.6 135.4" fill="none" stroke="#1a6fd0" stroke-width="2" stroke-linecap="round"/></svg>
<div class="a" style="left:572px;top:138px;width:16px;height:4px;background:#fff;border:1px solid #a0a0a0;"></div>
<svg style="left:0;top:0" width="1" height="1"><path d="M595.85 133.2L598.45 135.75L601.05 133.2" fill="none" stroke="#333" stroke-width="1.1"/></svg>
<svg style="left:0;top:0" width="1" height="1"><path d="M613 126.5H628M613 133.5H628" fill="none" stroke="#222" stroke-width="1" stroke-dasharray="1 1" shape-rendering="crispEdges"/></svg>
<svg style="left:0;top:0" width="1" height="1"><path d="M613.5 128V131M613.5 136V139" fill="none" stroke="#222" stroke-width="1" stroke-dasharray="1 1" shape-rendering="crispEdges"/></svg>
<svg style="left:0;top:0" width="1" height="1"><path d="M620.5 128V131M620.5 136V139" fill="none" stroke="#222" stroke-width="1" stroke-dasharray="1 1" shape-rendering="crispEdges"/></svg>
<svg style="left:0;top:0" width="1" height="1"><path d="M627.5 128V131M627.5 136V139" fill="none" stroke="#222" stroke-width="1" stroke-dasharray="1 1" shape-rendering="crispEdges"/></svg>
<div class="a" style="left:613px;top:140px;width:15px;height:1.4px;background:#111;"></div>
<svg style="left:0;top:0" width="1" height="1"><path d="M636.75 133.2L639.45 135.75L642.15 133.2" fill="none" stroke="#333" stroke-width="1.1"/></svg>
<span class="a" style="left:499.3px;top:162px;font-size:11.3px;line-height:12px;height:12px;color:#333;transform:scaleX(0.9893);transform-origin:0 0;">Paragraph</span>
<svg style="left:0;top:0" width="1" height="1"><path d="M646.9 169.5V164.5H651.9 M649.4 167L653.7 171.3 M653.9 168V171.5H650.4" fill="none" stroke="#444" stroke-width="1" /></svg>
<div class="a" style="left:658px;top:83.5px;width:1px;height:88.5px;background:#c9c9c9;"></div>
<div class="a" style="left:669px;top:90px;width:350px;height:60px;background:#fff;border:1px solid #c8c8c8;border-radius:4px;"></div>
<div class="a" style="left:670px;top:92px;width:108px;height:56px;background:#fff;border:1px solid #8a8a8a;box-shadow:inset 0 0 0 2px #e6e6e6;"></div>
<span class="a" style="left:701.4px;top:113px;font-size:13px;line-height:15px;height:15px;color:#242424;transform:scaleX(1.0834);transform-origin:0 0;">Normal</span>
<span class="a" style="left:799.8px;top:112px;font-size:15px;line-height:16px;height:16px;font-family:'Liberation Serif',serif;color:#111;transform:scaleX(1.0378);transform-origin:0 0;">Body Text</span>
<div class="a" style="left:890px;top:92px;width:98.5px;height:56px;overflow:hidden"><span class="a" style="left:3px;top:13px;font-family:'Liberation Serif',serif;font-weight:bold;font-size:26.6px;line-height:30px;color:#000;letter-spacing:0px">1  Headi</span></div>
<div class="a" style="left:995px;top:90px;width:24px;height:60px;background:#fff;border:1px solid #5e5e5e;border-radius:0 5px 5px 0;"></div>
<svg style="left:0;top:0" width="1" height="1"><path d="M1003.4 116.4H1009.6M1003.6 118.8L1006.5 121.4L1009.4 118.8" fill="none" stroke="#333" stroke-width="1" /></svg>
<span class="a" style="left:822.5px;top:162px;font-size:11.3px;line-height:12px;height:12px;color:#333;transform:scaleX(0.9101);transform-origin:0 0;">Styles</span>
<svg style="left:0;top:0" width="1" height="1"><path d="M1018.5 169.5V164.5H1023.5 M1021 167L1025.3 171.3 M1025.5 168V171.5H1022" fill="none" stroke="#444" stroke-width="1" /></svg>
<div class="a" style="left:1029px;top:83.5px;width:1px;height:88.5px;background:#c9c9c9;"></div>
<svg style="left:0;top:0" width="1" height="1"><circle cx="1052.4" cy="91.5" r="5.1" fill="#f8f8f8" stroke="#3a3a3a" stroke-width="1.15"/><path d="M1048.7 95.2L1043 101" stroke="#3a3a3a" stroke-width="1.3" fill="none"/></svg>
<span class="a" style="left:1062.3px;top:89px;font-size:11.6px;line-height:12px;height:12px;color:#1c1c1c;transform:scaleX(0.9884);transform-origin:0 0;">Find</span>
<svg style="left:0;top:0" width="1" height="1"><path d="M1103.15 93.4L1105.8 95.85L1108.45 93.4" fill="none" stroke="#333" stroke-width="1.1"/></svg>
<span class="a" style="left:1047.9px;top:110px;font-size:10.5px;line-height:12px;height:12px;color:#b146c2;transform:scaleX(0.8727);transform-origin:0 0;">b</span>
<span class="a" style="left:1051.8px;top:118px;font-size:11px;line-height:12px;height:12px;color:#1e88d8;transform:scaleX(0.8000);transform-origin:0 0;">c</span>
<svg style="left:0;top:0" width="1" height="1"><path d="M1045.8 118C1042.6 118.6 1041.5 121.4 1042.9 123.3C1044 124.7 1046 124.9 1049 124.8M1046.5 122L1049.5 124.8L1046.5 127.6" fill="none" stroke="#1e88d8" stroke-width="1.35" /></svg>
<span class="a" style="left:1062.3px;top:115px;font-size:11.6px;line-height:12px;height:12px;color:#1c1c1c;transform:scaleX(0.9613);transform-origin:0 0;">Replace</span>
<svg style="left:0;top:0" width="1" height="1"><path d="M1044.6 139.2V151.6L1047.8 148.8L1050 153.6L1051.8 152.8L1049.6 148.2H1053.8Z" fill="#fdfdfd" stroke="#333" stroke-width="1" stroke-linejoin="round"/></svg>
<span class="a" style="left:1062.3px;top:141px;font-size:11.6px;line-height:12px;height:12px;color:#1c1c1c;transform:scaleX(0.9524);transform-origin:0 0;">Select</span>
<svg style="left:0;top:0" width="1" height="1"><path d="M1097.15 145.4L1099.8 147.85L1102.45 145.4" fill="none" stroke="#333" stroke-width="1.1"/></svg>
<span class="a" style="left:1059.3px;top:162px;font-size:11.3px;line-height:12px;height:12px;color:#333;transform:scaleX(1.0479);transform-origin:0 0;">Editing</span>
<div class="a" style="left:1125px;top:83.5px;width:1px;height:88.5px;background:#c9c9c9;"></div>
<svg style="left:0;top:0" width="1" height="1"><rect x="1150" y="86.4" width="10.4" height="20" rx="5.2" fill="#d2d2d2" stroke="#b4b4b4" stroke-width="1"/><path d="M1146.3 101.4C1146.3 107 1150 110.4 1155.2 110.4C1160.4 110.4 1164.1 107 1164.1 101.4M1155.2 110.4V115.6" fill="none" stroke="#b0b0b0" stroke-width="1.3"/></svg>
<span class="a" style="left:1136.6px;top:122px;font-size:11.6px;line-height:12px;height:12px;color:#b4b4b4;transform:scaleX(1.0140);transform-origin:0 0;">Dictate</span>
<svg style="left:0;top:0" width="1" height="1"><path d="M1151.95 142.8L1154.5 145.05L1157.05 142.8" fill="none" stroke="#bdbdbd" stroke-width="1.1"/></svg>
<span class="a" style="left:1141px;top:162px;font-size:11.3px;line-height:12px;height:12px;color:#333;transform:scaleX(0.9696);transform-origin:0 0;">Voice</span>
<div class="a" style="left:1183px;top:83.5px;width:1px;height:88.5px;background:#c9c9c9;"></div>
<svg style="left:0;top:0" width="1" height="1"><path d="M1217.6 96.3H1225.6M1212 103.1H1221M1206.6 110H1215.8" stroke="#185abd" stroke-width="3.7" stroke-linecap="round" fill="none"/><path d="M1214.96 86.48L1220.44 90.52L1205.04 111.42L1197.9 115.4L1199.56 107.38Z" fill="#fafafa" stroke="#185abd" stroke-width="1.35" stroke-linejoin="round"/><path d="M1214.96 86.48L1220.44 90.52L1218 93.9L1212.5 89.9Z" fill="#185abd" stroke="#185abd" stroke-width="1" stroke-linejoin="round"/></svg>
<span class="a" style="left:1197.4px;top:122px;font-size:11.6px;line-height:12px;height:12px;color:#1c1c1c;transform:scaleX(1.0166);transform-origin:0 0;">Editor</span>
<span class="a" style="left:1197.4px;top:162px;font-size:11.3px;line-height:12px;height:12px;color:#333;transform:scaleX(1.0435);transform-origin:0 0;">Editor</span>
<div class="a" style="left:1241px;top:83.5px;width:1px;height:88.5px;background:#c9c9c9;"></div>
<svg style="left:0;top:0" width="1" height="1"><rect x="1259.6" y="87.6" width="27" height="27" fill="#fdfdfd" stroke="#d83b01" stroke-width="1.3"/><rect x="1263.2" y="91.2" width="8.4" height="8.4" fill="none" stroke="#d83b01" stroke-width="1.1"/><rect x="1274.6" y="91.2" width="8.4" height="8.4" fill="none" stroke="#d83b01" stroke-width="1.1"/><rect x="1263.2" y="102.6" width="8.4" height="8.4" fill="none" stroke="#d83b01" stroke-width="1.1"/><rect x="1274.6" y="102.6" width="8.4" height="8.4" fill="none" stroke="#d83b01" stroke-width="1.1"/></svg>
<span class="a" style="left:1252.3px;top:122px;font-size:11.6px;line-height:12px;height:12px;color:#1c1c1c;transform:scaleX(1.0607);transform-origin:0 0;">Add-ins</span>
<span class="a" style="left:1253px;top:162px;font-size:11.3px;line-height:12px;height:12px;color:#333;transform:scaleX(1.0440);transform-origin:0 0;">Add-ins</span>
<div class="a" style="left:1304px;top:83.5px;width:1px;height:88.5px;background:#c9c9c9;"></div>
<svg style="left:0;top:0" width="1" height="1"><path d="M1338.95 162.4L1343.6 167.05L1348.25 162.4" fill="none" stroke="#333" stroke-width="1.1"/></svg>
<div id="status"></div>
<span class="a" style="left:11.4px;top:712px;font-size:11.4px;line-height:12px;height:12px;color:#1f1f1f;transform:scaleX(0.9658);transform-origin:0 0;">Page 1 of 52</span>
<span class="a" style="left:94.3px;top:711px;font-size:11.4px;line-height:12px;height:12px;color:#2e2e2e;transform:scaleX(1.0026);transform-origin:0 0;">5114 words</span>
<svg style="left:0;top:0" width="1" height="1"><path d="M172.6 712.4H178.2C178.8 712.4 179.3 712.8 179.3 713.4V722.4M179.3 713.4C179.3 712.8 179.8 712.4 180.4 712.4H185.4V715.6M172.6 712.4V722.4H177.4" fill="none" stroke="#333" stroke-width="1.1" /></svg>
<svg style="left:0;top:0" width="1" height="1"><path d="M179.8 723.4L180.6 720.4L185.2 715.6L187 717.4L182.6 722.4Z" fill="#f3f3f3" stroke="#333" stroke-width="1" stroke-linejoin="round"/></svg>
<span class="a" style="left:204.3px;top:711px;font-size:11.4px;line-height:12px;height:12px;color:#2e2e2e;transform:scaleX(0.9897);transform-origin:0 0;">English (United States)</span>
<span class="a" style="left:338.3px;top:712px;font-size:11.4px;line-height:12px;height:12px;color:#1f1f1f;transform:scaleX(0.9947);transform-origin:0 0;">Text Predictions: On</span>
<svg style="left:0;top:0" width="1" height="1"><circle cx="465.8" cy="711.8" r="1.5" fill="none" stroke="#333" stroke-width="1"/><path d="M460.6 714.6C462.6 715.4 463.8 715.6 465.8 715.6C467.8 715.6 469 715.4 471 714.6M464.2 715.6V719L462 723.4M467.4 715.6V718.4" fill="none" stroke="#333" stroke-width="1.1" stroke-linecap="round"/><path d="M468 718.8L473.6 723.6M473.6 718.8L468 723.6" fill="none" stroke="#333" stroke-width="1.1"/></svg>
<span class="a" style="left:478.6px;top:712px;font-size:11.4px;line-height:12px;height:12px;color:#333;transform:scaleX(1.0158);transform-origin:0 0;-webkit-text-stroke:0.45px #333;">Accessibility: Investigate</span>
<svg style="left:0;top:0" width="1" height="1"><path d="M1007.4 713.4V710.6H1010.4M1017.8 710.6H1020.8V713.4M1020.8 720.6V723.4H1017.8M1010.4 723.4H1007.4V720.6" fill="none" stroke="#333" stroke-width="1.1" /></svg>
<svg style="left:0;top:0" width="1" height="1"><path d="M1010.6 712.6H1015.2L1017.8 715.2V721.6H1010.6ZM1015 712.8V715.4H1017.6" fill="none" stroke="#333" stroke-width="1" /></svg>
<span class="a" style="left:1024.6px;top:712px;font-size:11.4px;line-height:12px;height:12px;color:#1f1f1f;transform:scaleX(0.9345);transform-origin:0 0;">Focus</span>
<svg style="left:0;top:0" width="1" height="1"><path d="M1085.7 712.4C1084 711 1081.6 710.8 1079.6 711.2V720.8C1081.6 720.4 1084 720.6 1085.7 722C1087.4 720.6 1089.8 720.4 1091.8 720.8V711.2C1089.8 710.8 1087.4 711 1085.7 712.4ZM1085.7 712.4V722" fill="none" stroke="#333" stroke-width="1.1" stroke-linejoin="round"/></svg>
<svg style="left:0;top:0" width="1" height="1"><path d="M1081.4 713.8H1084M1081.4 715.8H1084M1081.4 717.8H1084M1087.4 713.8H1090M1087.4 715.8H1090M1087.4 717.8H1090" fill="none" stroke="#333" stroke-width="0.8" /></svg>
<div class="a" style="left:1106px;top:707px;width:40px;height:21px;background:#dedede;"></div>
<svg style="left:0;top:0" width="1" height="1"><path d="M1120.5 710.9H1130.5V723.5H1120.5Z" fill="#f6f6f6" stroke="#333" stroke-width="1.1" /></svg>
<svg style="left:0;top:0" width="1" height="1"><path d="M1122 713.4H1129M1122 715.4H1129M1122 717.4H1129M1122 719.4H1129M1122 721.4H1129" fill="none" stroke="#333" stroke-width="0.9" /></svg>
<svg style="left:0;top:0" width="1" height="1"><path d="M1166 722.6H1159.5V710.9H1170.5V715.6" fill="none" stroke="#333" stroke-width="1.1" /></svg>
<svg style="left:0;top:0" width="1" height="1"><path d="M1161.4 713.4H1168.6M1161.4 715.6H1166.6M1161.4 717.8H1164.6M1161.4 720H1164" fill="none" stroke="#333" stroke-width="0.9" /></svg>
<svg style="left:0;top:0" width="1" height="1"><circle cx="1169.2" cy="720" r="3.6" fill="#f3f3f3" stroke="#333" stroke-width="1"/><path d="M1165.6 720H1172.8M1169.2 716.4C1167.4 718.4 1167.4 721.6 1169.2 723.6C1171 721.6 1171 718.4 1169.2 716.4" fill="none" stroke="#333" stroke-width="0.8"/></svg>
<svg style="left:0;top:0" width="1" height="1"><path d="M1192.2 717H1199.8" fill="none" stroke="#444" stroke-width="1.1" /></svg>
<div class="a" style="left:1205px;top:717px;width:100px;height:1px;background:#6a6a6a;"></div>
<div class="a" style="left:1255px;top:715px;width:1px;height:5px;background:#6a6a6a;"></div>
<div class="a" style="left:1227px;top:712px;width:5px;height:11px;background:#6e6e6e;"></div>
<svg style="left:0;top:0" width="1" height="1"><path d="M1310 717.5H1318M1314 713.5V721.5" fill="none" stroke="#444" stroke-width="1.1" /></svg>
<span class="a" style="left:1331.6px;top:711px;font-size:11.4px;line-height:12px;height:12px;color:#1f1f1f;transform:scaleX(0.9030);transform-origin:0 0;">50%</span>
<div id="task"></div>
<svg style="left:0;top:0" width="1" height="1"><path d="M16 742.3L22.6 741.4V747.5H16ZM23.5 741.3L32 740.1V747.5H23.5ZM16 748.4H22.6V754.5L16 753.6ZM23.5 748.4H32V755.8L23.5 754.6Z" fill="#ffffff" stroke="none" stroke-width="0" /></svg>
<div class="a" style="left:48px;top:728px;width:344px;height:40px;background:#f2f2f2;border-top:1px solid #c4c4c4;border-bottom:1px solid #ababab;"></div>
<svg style="left:0;top:0" width="1" height="1"><circle cx="70.4" cy="745.4" r="5.4" fill="none" stroke="#333" stroke-width="1.3"/><path d="M66.4 749.4L60.4 755.6" stroke="#333" stroke-width="1.4" fill="none"/></svg>
<span class="a" style="left:88.8px;top:740px;font-size:15px;line-height:17px;height:17px;color:#3a3a3a;transform:scaleX(0.9594);transform-origin:0 0;">Type here to search</span>
<svg style="left:0;top:0" width="1" height="1"><path d="M409.5 741.5H420.5M409.5 754.5H420.5" fill="none" stroke="#ffffff" stroke-width="1.1" /></svg>
<svg style="left:0;top:0" width="1" height="1"><path d="M409.5 744.5H420.5V751.5H409.5Z" fill="none" stroke="#ffffff" stroke-width="1.1" /></svg>
<svg style="left:0;top:0" width="1" height="1"><path d="M423.6 741V755" fill="none" stroke="#ffffff" stroke-width="1.1" stroke-dasharray="3 2 4 2 3"/></svg>
<div class="a" style="left:422.6px;top:745px;width:2px;height:3px;background:#ffffff;"></div>
<svg style="left:0;top:0" width="1" height="1">
<path d="M456.5 741.5C456.5 740.6 457.2 739.9 458.1 739.9H464.2L466.4 742H476.4C477.3 742 478 742.7 478 743.6V745H456.5Z" fill="#e9a825"/>
<rect x="456.5" y="742.6" width="21.5" height="13.6" rx="1" fill="#fcd667"/>
<path d="M456.5 752H478V755.2C478 755.8 477.5 756.2 477 756.2H457.5C457 756.2 456.5 755.8 456.5 755.2Z" fill="#f3c23b"/>
<path d="M461.6 756.2V750.2C461.6 749.6 462 749.2 462.6 749.2H471.8C472.4 749.2 472.8 749.6 472.8 750.2V756.2H470V752H464.4V756.2Z" fill="#3b9be6"/>
</svg>
<div class="a" style="left:447px;top:766px;width:39.6px;height:2px;background:#7dbdf0;"></div>
<div class="a" style="left:479px;top:766px;width:1px;height:2px;background:#3a4a58;"></div>
<svg style="left:0;top:0" width="1" height="1">
<rect x="513.5" y="737.4" width="9.6" height="8" fill="#d9d9d9" stroke="#777" stroke-width="0.6"/><rect x="514.8" y="738.6" width="7" height="5.4" fill="#1010c8"/>
<path d="M511.6 747H525.6L527 749.4H512.8Z" fill="#c8c8c8" stroke="#777" stroke-width="0.5"/>
<rect x="506.5" y="747.4" width="9.6" height="8" fill="#d9d9d9" stroke="#777" stroke-width="0.6"/><rect x="507.8" y="748.6" width="7" height="5.4" fill="#1010c8"/>
<path d="M504.8 756.6H518.8L520.2 759H506Z" fill="#c8c8c8" stroke="#777" stroke-width="0.5"/>
<path d="M519.6 740.4L514.2 746.6H517L511.6 752.8L519 747.6H516.2Z" fill="#ffe600" stroke="#8a7a00" stroke-width="0.5"/>
</svg>
<svg style="left:0;top:0" width="1" height="1">
<path d="M559.6 742.6V740.6C559.6 739 560.8 737.9 562.4 737.9H567C568.6 737.9 569.8 739 569.8 740.6V742.6" fill="none" stroke="#3aa0e8" stroke-width="1.6"/>
<path d="M553.4 743.6C553.4 742.6 554.2 741.8 555.2 741.8H574.2C575.2 741.8 576 742.6 576 743.6V756.4C576 758.4 574.4 760 572.4 760H557C555 760 553.4 758.4 553.4 756.4Z" fill="#f4f4f4"/>
<rect x="560" y="746.4" width="4.2" height="4.2" fill="#f25022"/><rect x="565.2" y="746.4" width="4.2" height="4.2" fill="#7fba00"/><rect x="560" y="751.6" width="4.2" height="4.2" fill="#00a4ef"/><rect x="565.2" y="751.6" width="4.2" height="4.2" fill="#ffb900"/>
</svg>
<svg style="left:0;top:0" width="1" height="1">
<rect x="602" y="736.4" width="24" height="23.4" rx="2.4" fill="#4a4a4a"/>
<path d="M608 744.4L620 740.6V745L608 748.8Z" fill="#ff9800"/><path d="M608 748.8L620 752.4V747.9L608 744.4Z" fill="#f08a00"/><path d="M608 755.6L620 752V756.4L608 760.2Z" fill="#ff9800" transform="translate(0,-3.6)"/>
</svg>
<div class="a" style="left:594px;top:766px;width:40px;height:2px;background:#7dbdf0;"></div>
<svg style="left:0;top:0" width="1" height="1">
<path d="M653.6 744.6L662.8 737.4C663.6 736.8 664.6 736.8 665.4 737.4L673.6 743.8C674.2 744.3 674.4 744.8 674.4 745.6V756.4C674.4 757.8 673.2 759 671.8 759H656.2C654.8 759 653.6 757.8 653.6 756.4Z" fill="#3f8ef0"/>
<path d="M658 741L664 736.8L674 744.6L667.6 749Z" fill="#7b5cf0" opacity=".75"/>
<path d="M657 749.4L674.4 745.8V756.4C674.4 757.8 673.2 759 671.8 759H657Z" fill="#39c1f8" opacity=".8"/>
<rect x="651" y="747.4" width="10.4" height="10.4" rx="1.6" fill="#1456c8"/>
<circle cx="656.2" cy="752.6" r="2.5" fill="none" stroke="#fff" stroke-width="1.3"/>
</svg>
<svg style="left:0;top:0" width="1" height="1">
<circle cx="712" cy="748" r="11.2" fill="#1ed760"/>
<path d="M705.2 744.2C709.6 742.9 714.8 743.3 718.8 745.6" fill="none" stroke="#10161a" stroke-width="2" stroke-linecap="round"/>
<path d="M705.8 748C709.6 747 713.8 747.4 717.4 749.4" fill="none" stroke="#10161a" stroke-width="1.7" stroke-linecap="round"/>
<path d="M706.6 751.6C709.6 750.8 713 751.1 716 752.8" fill="none" stroke="#10161a" stroke-width="1.4" stroke-linecap="round"/>
</svg>
<svg style="left:0;top:0" width="1" height="1">
<circle cx="761" cy="748" r="12" fill="#1070c8"/>
<path d="M749.4 745C750.6 739.6 755.4 736 761 736C767.6 736 773 741 773 747.6C773 750.8 770.6 752.8 767.8 752.8C765.6 752.8 764 751.8 764 750.4C764 749.4 765 748.8 765 747.4C765 745.4 763 743.6 760.2 743.6C756 743.6 752.4 746 749.4 745Z" fill="#1f9fe0"/>
<path d="M761 736C767.6 736 773 741 773 747.6C773 750.8 770.6 752.8 767.8 752.8C765.6 752.8 764 751.8 764 750.4C764 749.4 765 748.8 765 747.4C765 745.4 763 743.6 760.2 743.6C759 743.6 758 743.8 757 744.1C757.6 740.4 759 737.4 761 736Z" fill="#35c1a0"/>
<path d="M766.4 737.3C770.4 739.3 773 743.1 773 747.6C773 750.8 770.6 752.8 767.8 752.8C766.8 752.8 766 752.6 765.3 752.3C768.2 748 768.6 742 766.4 737.3Z" fill="#6cd34c"/>
<path d="M755.6 749.4C755.6 753.8 759.4 757.8 765 757.8C767.4 757.8 769.6 757.2 771.6 755.8C769.4 758.6 765.6 760 761.8 760C755 760 749 755 749 748C749 747 749.2 746 749.4 745C751 746.6 755.6 746.4 755.6 749.4Z" fill="#0d4f9e"/>
</svg>
<svg style="left:0;top:0" width="1" height="1">
<circle cx="810" cy="748" r="12" fill="#fbc116"/>
<path d="M810 748L799.6 742A12 12 0 0 1 820.4 742Z" fill="#e33b2e"/>
<path d="M799.6 742A12 12 0 0 1 820.4 742L810 742Z" fill="#e33b2e"/>
<path d="M799.6 742A12 12 0 0 0 810 760L815.2 751L810 748Z" fill="#2da94f"/>
<path d="M799.6 742L804.8 751L810 760A12 12 0 0 1 799.6 742Z" fill="#2da94f"/>
<circle cx="810" cy="748" r="5.6" fill="#fff"/><circle cx="810" cy="748" r="4.4" fill="#4285f4"/>
</svg>
<div class="a" style="left:790px;top:766px;width:40px;height:2px;background:#7dbdf0;"></div>
<div class="a" style="left:835px;top:728px;width:48px;height:40px;background:#50514d;"></div>
<div class="a" style="left:835px;top:766px;width:48px;height:2px;background:#7dbdf0;"></div>
<svg style="left:0;top:0" width="1" height="1">
<rect x="853" y="737" width="18.4" height="5.6" fill="#41a5ee"/><rect x="853" y="742.4" width="18.4" height="5.4" fill="#2b7cd3"/><rect x="853" y="747.6" width="18.4" height="5.4" fill="#185abd"/><rect x="853" y="752.8" width="18.4" height="5.4" fill="#103f91"/>
<rect x="847" y="741.2" width="12.6" height="12.6" rx="1" fill="#185abd"/>
<path d="M849.6 744.2L851.4 751L853.3 744.6L855.2 751L857 744.2" fill="none" stroke="#fff" stroke-width="1.5" stroke-linejoin="round" stroke-linecap="round"/>
</svg>
<div class="a" style="left:998px;top:738.2px;width:20px;height:20px;border-radius:10px;background:linear-gradient(160deg,#ffd400 5%,#fda500 50%,#e85a0c 95%);"></div>
<svg style="left:0;top:0" width="1" height="1">

<circle cx="1014.2" cy="742" r="6" fill="#d83a32"/>
</svg>
<span class="a" style="left:1012.2px;top:737px;font-size:8.5px;line-height:10px;height:10px;font-weight:bold;color:#fff;transform:scaleX(0.8871);transform-origin:0 0;">3</span>
<span class="a" style="left:1028.2px;top:740px;font-size:14px;line-height:16px;height:16px;color:#fff;transform:scaleX(0.9207);transform-origin:0 0;">31°C</span>
<span class="a" style="left:1066.3px;top:740px;font-size:14px;line-height:16px;height:16px;color:#fff;transform:scaleX(0.9395);transform-origin:0 0;">Sunny</span>
<svg style="left:0;top:0" width="1" height="1"><path d="M1129.6 751L1135.2 745.4L1140.8 751" fill="none" stroke="#ffffff" stroke-width="1.3" /></svg>
<svg style="left:0;top:0" width="1" height="1"><path d="M1151.4 742.6L1166.6 741V754.6L1151.4 753.4Z" fill="none" stroke="#ffffff" stroke-width="1.1" /></svg>
<svg style="left:0;top:0" width="1" height="1"><path d="M1156 746.6C1157.4 745 1160 745 1161.4 746.4M1161.6 744.6V746.8H1159.4M1161.4 749.4C1160 751 1157.4 751 1156 749.6M1155.8 751.4V749.2H1158" fill="none" stroke="#ffffff" stroke-width="0.9" /></svg>
<svg style="left:0;top:0" width="1" height="1"><circle cx="1163.6" cy="752.6" r="3.4" fill="#2f7fe0"/></svg>
<svg style="left:0;top:0" width="1" height="1"><path d="M1176.4 744.4H1189.2V752.6H1176.4Z" fill="none" stroke="#ffffff" stroke-width="1.1" /></svg>
<div class="a" style="left:1178px;top:746px;width:6px;height:5px;background:#ffffff;"></div>
<div class="a" style="left:1189.6px;top:746.6px;width:1.4px;height:3.8px;background:#ffffff;"></div>
<svg style="left:0;top:0" width="1" height="1"><path d="M1199.4 746H1202L1205.6 742.6V754.4L1202 751H1199.4Z" fill="none" stroke="#ffffff" stroke-width="1" stroke-linejoin="round"/></svg>
<svg style="left:0;top:0" width="1" height="1"><path d="M1208 745.6C1209.4 747 1209.4 750 1208 751.4M1210.4 743.6C1212.8 746 1212.8 751 1210.4 753.4M1212.8 741.8C1216.2 745.2 1216.2 751.8 1212.8 755.2" fill="none" stroke="#ffffff" stroke-width="0.9" /></svg>
<span class="a" style="left:1225.4px;top:741px;font-size:12px;line-height:14px;height:14px;color:#fff;transform:scaleX(0.8610);transform-origin:0 0;">ENG</span>
<span class="a" style="left:1270.6px;top:732px;font-size:12px;line-height:14px;height:14px;color:#fff;transform:scaleX(0.8724);transform-origin:0 0;">16:22</span>
<span class="a" style="left:1261.9px;top:750px;font-size:12px;line-height:14px;height:14px;color:#fff;transform:scaleX(0.9718);transform-origin:0 0;">10/22/25</span>
<svg style="left:0;top:0" width="1" height="1"><path d="M1325.4 740.6H1341V751.8H1332.6L1328.6 755.4V751.8H1325.4Z" fill="#ffffff" stroke="#ffffff" stroke-width="1" stroke-linejoin="round"/></svg>
<svg style="left:0;top:0" width="1" height="1"><path d="M1327.6 743.4H1338.8M1327.6 745.8H1338.8M1327.6 748.2H1338.8" fill="none" stroke="#1f2022" stroke-width="0.9" /></svg>
<svg style="left:0;top:0" width="1" height="1"><circle cx="1340.6" cy="755" r="7.6" fill="#222426" stroke="#e8e8e8" stroke-width="1"/></svg>
<span class="a" style="left:1337.8px;top:749px;font-size:11px;line-height:12px;height:12px;color:#fff;transform:scaleX(0.9469);transform-origin:0 0;">8</span>
<div class="a" style="left:1361px;top:728px;width:1px;height:40px;background:#55585a;"></div>
</div>
</body>
</html>
